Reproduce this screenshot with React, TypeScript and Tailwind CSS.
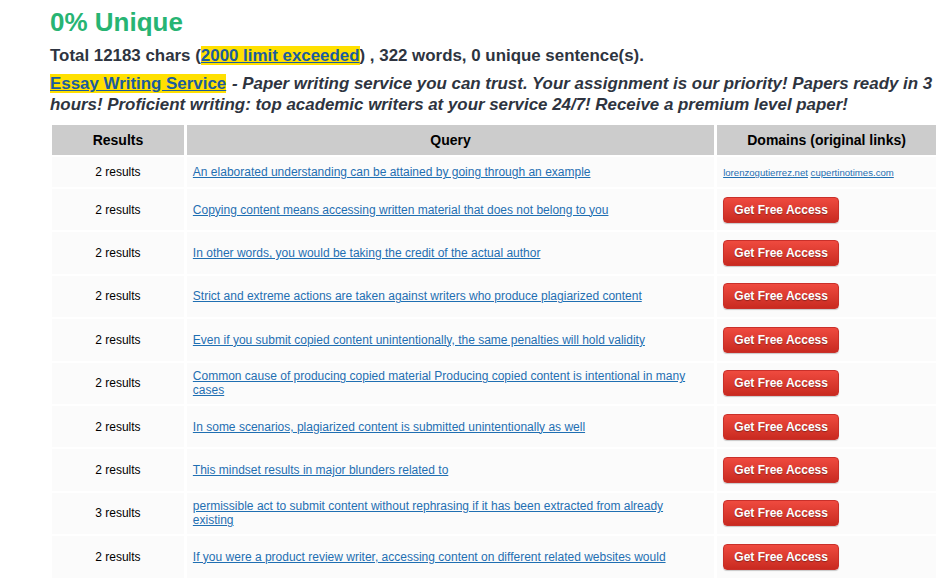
const rows: { count: number; query: string; first?: boolean }[] = [
  { count: 2, query: "An elaborated understanding can be attained by going through an example", first: true },
  { count: 2, query: "Copying content means accessing written material that does not belong to you" },
  { count: 2, query: "In other words, you would be taking the credit of the actual author" },
  { count: 2, query: "Strict and extreme actions are taken against writers who produce plagiarized content" },
  { count: 2, query: "Even if you submit copied content unintentionally, the same penalties will hold validity" },
  { count: 2, query: "Common cause of producing copied material Producing copied content is intentional in many cases" },
  { count: 2, query: "In some scenarios, plagiarized content is submitted unintentionally as well" },
  { count: 2, query: "This mindset results in major blunders related to" },
  { count: 3, query: "permissible act to submit content without rephrasing if it has been extracted from already existing" },
  { count: 2, query: "If you were a product review writer, accessing content on different related websites would" },
];

export default function App() {
  return (
    <div className="min-h-screen w-[939px] overflow-hidden bg-white pl-[50px] pt-[6px] font-['Liberation_Sans',Arial,sans-serif] text-[#2e3440]">
      {/* Summary */}
      <h1 className="text-[26px] font-bold leading-[32px] text-[#27b473]">0% Unique</h1>
      <p className="mt-[7px] text-[16.9px] font-bold leading-[22px]">
        Total 12183 chars (
        <a href="#" className="bg-[#ffe000] text-[#1b5c9e] underline">2000 limit exceeded</a>
        ) , 322 words, 0 unique sentence(s).
      </p>
      <p className="mt-[6px] w-[885px] text-[16.9px] font-bold italic leading-[21px]">
        <a href="#" className="mr-[1px] bg-[#ffe000] not-italic text-[#1b5c9e] underline">Essay Writing Service</a>
        {" "}- Paper writing service you can trust. Your assignment is our priority! Papers ready in 3 hours! Proficient writing: top academic writers at your service 24/7! Receive a premium level paper!
      </p>

      {/* Results table */}
      <table className="mt-[8px] -ml-[1px] border-separate border-spacing-x-[3px] border-spacing-y-[2px] text-[12px]">
        <thead>
          <tr>
            <th className="h-[30px] w-[132px] bg-[#cccccc] text-[14px] font-bold text-black">Results</th>
            <th className="h-[30px] w-[528px] bg-[#cccccc] text-[14px] font-bold text-black">Query</th>
            <th className="h-[30px] w-[219px] bg-[#cccccc] text-[14px] font-bold text-black">Domains (original links)</th>
          </tr>
        </thead>
        <tbody>
          {rows.map((r, i) => (
            <tr key={i} className={r.first ? "h-[30px]" : "h-[41.4px]"}>
              <td className="bg-[#fbfbfb] text-center text-black">{r.count} results</td>
              <td className="bg-[#fbfbfb] pl-[6px] pr-[24px] leading-[14px]">
                <a href="#" className="text-[#1f6fb2] underline">{r.query}</a>
              </td>
              <td className="bg-[#fbfbfb] px-[6px]">
                {r.first ? (
                  <span className="text-[9.6px]">
                    <a href="#" className="text-[#1f6fb2] underline">lorenzogutierrez.net</a>{" "}
                    <a href="#" className="text-[#1f6fb2] underline">cupertinotimes.com</a>
                  </span>
                ) : (
                  <button className="h-[26px] w-[116px] rounded-[4px] border border-[#c9302a] bg-gradient-to-b from-[#ef4a3f] to-[#c92a20] text-[12px] font-bold text-white [text-shadow:0_1px_1px_rgba(0,0,0,0.35)] shadow-[0_1px_1px_rgba(0,0,0,0.2)]">
                    Get Free Access
                  </button>
                )}
              </td>
            </tr>
          ))}
        </tbody>
      </table>
    </div>
  );
}
